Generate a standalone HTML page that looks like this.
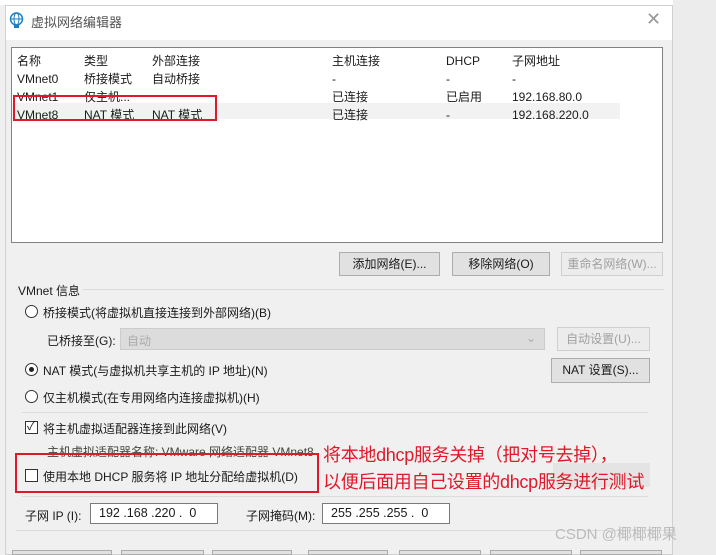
<!DOCTYPE html>
<html style="overflow:hidden;height:555px"><head><meta charset="utf-8"><style>
*{margin:0;padding:0;box-sizing:border-box}
body{width:716px;height:555px;overflow:hidden;background:#f0f0f0;font-family:"Liberation Sans","Noto Sans CJK SC",sans-serif;font-size:12px;color:#1a1a1a;position:relative}
.a{position:absolute;white-space:nowrap}
.btn{position:absolute;background:#e1e1e1;border:1px solid #adadad;text-align:center;line-height:22px;height:24px}
.dis{color:#a0a0a0;border-color:#cfcfcf;background:#ececec}
.radio{position:absolute;width:13px;height:13px;border:1px solid #333;border-radius:50%;background:#fff}
.chk{position:absolute;width:13px;height:13px;border:1px solid #333;background:#fff}
.in{position:absolute;background:#fff;border:1px solid #7a7a7a;height:21px;line-height:19px;padding-left:8px;font-size:12.5px}
</style></head><body>
<div class="a" style="left:0;top:0;width:716px;height:5px;background:#fff"></div>
<div class="a" style="left:673px;top:0;width:43px;height:555px;background:#ececec"></div>
<div class="a" style="left:5px;top:5px;width:668px;height:550px;background:#f0f0f0;border:1px solid #d0d0d0"></div>
<div class="a" style="left:6px;top:6px;width:666px;height:34px;background:#fff"></div>
<svg class="a" style="left:9px;top:12px" width="15" height="16" viewBox="0 0 15 16"><circle cx="7.5" cy="7" r="6" fill="none" stroke="#1a7fc1" stroke-width="1.5"/><ellipse cx="7.5" cy="7" rx="2.5" ry="6" fill="none" stroke="#1a7fc1"/><line x1="1.5" y1="7" x2="13.5" y2="7" stroke="#1a7fc1"/><rect x="5" y="13" width="5" height="3" fill="#1a7fc1"/></svg>
<div class="a" style="left:31px;top:12px;font-size:13px;color:#555">虚拟网络编辑器</div>
<div class="a" style="left:646px;top:9px;font-size:18px;color:#999">✕</div>
<div class="a" style="left:11px;top:47px;width:652px;height:196px;background:#fff;border:1px solid #828282"></div>
<div class="a" style="left:12px;top:103px;width:608px;height:16px;background:#f2f2f2"></div>
<div class="a" style="left:17px;top:52px;line-height:18px">名称<br>VMnet0<br>VMnet1<br>VMnet8</div>
<div class="a" style="left:84px;top:52px;line-height:18px">类型<br>桥接模式<br>仅主机...<br>NAT 模式</div>
<div class="a" style="left:152px;top:52px;line-height:18px">外部连接<br>自动桥接<br><br>NAT 模式</div>
<div class="a" style="left:332px;top:52px;line-height:18px">主机连接<br>-<br>已连接<br>已连接</div>
<div class="a" style="left:446px;top:52px;line-height:18px">DHCP<br>-<br>已启用<br>-</div>
<div class="a" style="left:512px;top:52px;line-height:18px">子网地址<br>-<br>192.168.80.0<br>192.168.220.0</div>
<div class="a" style="left:13px;top:95px;width:204px;height:26px;border:2px solid #e0182a"></div>
<div class="btn" style="left:339px;top:252px;width:101px">添加网络(E)...</div>
<div class="btn" style="left:452px;top:252px;width:98px">移除网络(O)</div>
<div class="btn dis" style="left:561px;top:252px;width:102px">重命名网络(W)...</div>
<div class="a" style="left:16px;top:289px;width:648px;height:1px;background:#dcdcdc"></div>
<div class="a" style="left:18px;top:282px;background:#f0f0f0;padding-right:3px">VMnet 信息</div>
<div class="radio" style="left:25px;top:305px"></div>
<div class="a" style="left:43px;top:304px">桥接模式(将虚拟机直接连接到外部网络)(B)</div>
<div class="a" style="left:47px;top:332px">已桥接至(G):</div>
<div class="a" style="left:120px;top:328px;width:425px;height:22px;background:#dcdcdc;border:1px solid #ccc;color:#aaa;padding:3px 6px">自动<span style="position:absolute;right:8px;top:2px">⌄</span></div>
<div class="btn dis" style="left:557px;top:327px;width:93px">自动设置(U)...</div>
<div class="radio" style="left:25px;top:363px"></div><div class="a" style="left:29px;top:367px;width:5px;height:5px;border-radius:50%;background:#222"></div>
<div class="a" style="left:43px;top:362px">NAT 模式(与虚拟机共享主机的 IP 地址)(N)</div>
<div class="btn" style="left:551px;top:358px;width:99px;height:25px">NAT 设置(S)...</div>
<div class="radio" style="left:25px;top:390px"></div>
<div class="a" style="left:43px;top:389px">仅主机模式(在专用网络内连接虚拟机)(H)</div>
<div class="a" style="left:22px;top:412px;width:626px;height:1px;background:#dcdcdc"></div>
<div class="chk" style="left:25px;top:421px"></div><div class="a" style="left:27px;top:417px;font-size:12px">✓</div>
<div class="a" style="left:43px;top:420px">将主机虚拟适配器连接到此网络(V)</div>
<div class="a" style="left:47px;top:443px;color:#444">主机虚拟适配器名称: VMware 网络适配器 VMnet8</div>
<div class="chk" style="left:25px;top:469px"></div>
<div class="a" style="left:43px;top:468px">使用本地 DHCP 服务将 IP 地址分配给虚拟机(D)</div>
<div class="a" style="left:15px;top:453px;width:304px;height:40px;border:2px solid #e0182a"></div>
<div class="a" style="left:553px;top:463px;width:97px;height:24px;background:#e4e4e4"></div>
<div class="a" style="left:323px;top:442px;font-size:18px;color:#e0182a;line-height:27px;letter-spacing:-0.3px">将本地dhcp服务关掉（把对号去掉），<br>以便后面用自己设置的dhcp服务进行测试</div>
<div class="a" style="left:22px;top:496px;width:626px;height:1px;background:#dcdcdc"></div>
<div class="a" style="left:25px;top:507px">子网 IP (I):</div>
<div class="in" style="left:90px;top:503px;width:128px">192 .168 .220 .&nbsp; 0</div>
<div class="a" style="left:246px;top:507px">子网掩码(M):</div>
<div class="in" style="left:322px;top:503px;width:128px">255 .255 .255 .&nbsp; 0</div>
<div class="a" style="left:16px;top:530px;width:648px;height:1px;background:#dcdcdc"></div>
<div class="a" style="left:555px;top:523px;font-size:15px;color:#bbb">CSDN @椰椰椰果</div>
<div class="btn" style="left:12px;top:550px;width:100px;height:5px"></div>
<div class="btn" style="left:121px;top:550px;width:83px;height:5px"></div>
<div class="btn" style="left:212px;top:550px;width:80px;height:5px"></div>
<div class="btn" style="left:308px;top:550px;width:80px;height:5px"></div>
<div class="btn" style="left:399px;top:550px;width:82px;height:5px"></div>
<div class="btn" style="left:490px;top:550px;width:82px;height:5px"></div>
<div class="btn" style="left:580px;top:550px;width:82px;height:5px"></div>
</body></html>
